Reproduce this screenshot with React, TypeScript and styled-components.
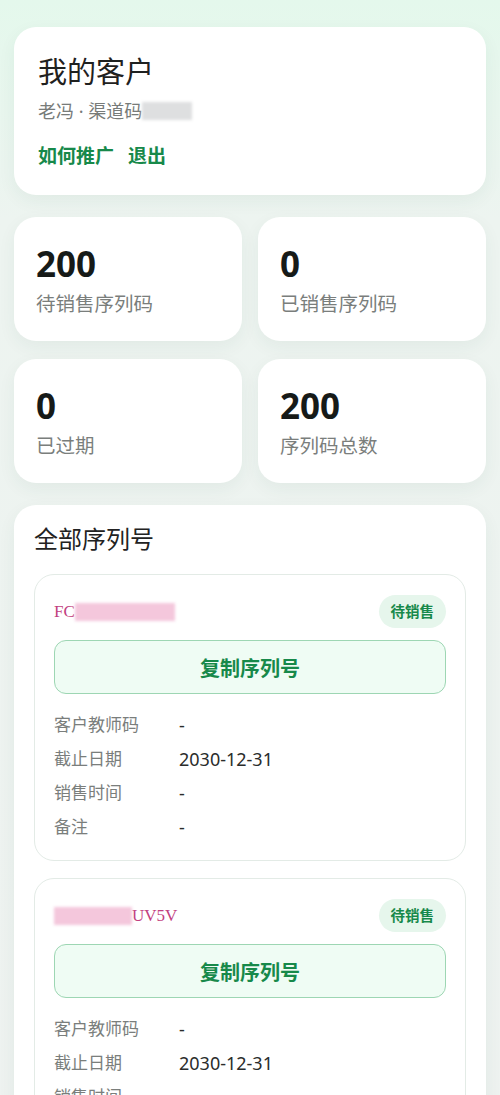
import React from 'react';
import styled, { createGlobalStyle } from 'styled-components';

const GlobalStyle = createGlobalStyle`
  html, body {
    margin: 0;
    padding: 0;
  }
  body {
    font-family: "Noto Sans", "Noto Sans CJK SC", sans-serif;
    background: linear-gradient(180deg, #e4f8ec 0px, #edf4f0 220px, #eef2f0 100%);
    color: #1d1f1e;
  }
`;

const Page = styled.div`
  display: flex;
  flex-direction: column;
  gap: 22px;
  padding: 27px 14px 40px;
  min-height: 1095px;
  box-sizing: border-box;
`;

const Panel = styled.section<{ $pad?: string }>`
  background: #fff;
  border-radius: 22px;
  padding: ${(p) => p.$pad || '24px'};
  box-shadow: 0 6px 18px rgba(40, 80, 60, 0.06);
`;

const HeaderTitle = styled.h1`
  margin: 0;
  font-size: 29px;
  font-weight: 400;
  line-height: 38px;
  color: #1f2120;
`;

const SubLine = styled.div`
  margin-top: 7px;
  font-size: 18px;
  line-height: 26px;
  color: #777b79;
  display: flex;
  align-items: center;
`;

const Mosaic = styled.span<{ $w: number; $color: string }>`
  display: inline-block;
  width: ${(p) => p.$w}px;
  height: 18px;
  background: ${(p) => p.$color};
  filter: blur(1.5px);
  vertical-align: middle;
`;

const Links = styled.div`
  display: flex;
  gap: 14px;
  margin-top: 19px;
`;

const TextLink = styled.a`
  font-size: 19px;
  font-weight: 700;
  color: #17894a;
  text-decoration: none;
  line-height: 26px;
`;

const StatGrid = styled.div`
  display: grid;
  grid-template-columns: 1fr 1fr;
  gap: 18px 16px;
`;

const StatCard = styled.div`
  background: #fff;
  border-radius: 22px;
  height: 124px;
  box-sizing: border-box;
  padding: 25px 22px 0;
  box-shadow: 0 6px 18px rgba(40, 80, 60, 0.06);
`;

const StatValue = styled.div`
  font-size: 35px;
  font-weight: 700;
  line-height: 44px;
  color: #161a18;
`;

const StatLabel = styled.div`
  margin-top: 4px;
  font-size: 19.5px;
  line-height: 28px;
  color: #7a7e7c;
`;

const SectionTitle = styled.h2`
  margin: 0 0 19px;
  font-size: 24px;
  font-weight: 400;
  line-height: 32px;
  color: #222;
`;

const SerialList = styled.div`
  display: flex;
  flex-direction: column;
  gap: 17px;
`;

const SerialCard = styled.div`
  border: 1px solid #e3ebe6;
  border-radius: 20px;
  padding: 20px 19px 21px;
`;

const SerialHead = styled.div`
  display: flex;
  align-items: center;
  justify-content: space-between;
`;

const SerialCode = styled.span`
  font-family: "Liberation Serif", "DejaVu Serif", serif;
  font-size: 17px;
  color: #c23f80;
  display: flex;
  align-items: center;
`;

const Badge = styled.span`
  background: #e6f6ec;
  color: #17894a;
  font-size: 14.5px;
  font-weight: 700;
  border-radius: 17px;
  padding: 0 12px;
  height: 33px;
  line-height: 33px;
`;

const CopyButton = styled.button`
  display: block;
  width: 100%;
  margin-top: 12px;
  height: 54px;
  border: 1px solid #9dd6b3;
  border-radius: 12px;
  background: #effcf4;
  color: #17894a;
  font-family: "Noto Sans CJK SC", sans-serif;
  font-size: 20px;
  font-weight: 700;
  cursor: pointer;
`;

const InfoTable = styled.dl`
  display: grid;
  grid-template-columns: 125px 1fr;
  row-gap: 10px;
  margin: 19px 0 0;
  font-size: 17px;
  line-height: 24px;
`;

const InfoKey = styled.dt`
  color: #7a7e7c;
`;

const InfoVal = styled.dd`
  margin: 0;
  color: #2a2c2b;
  font-size: 18px;
`;

type Serial = { head: React.ReactNode; deadline: string };

const serials: Serial[] = [
  {
    head: (
      <>
        FC<Mosaic $w={100} $color="#f4c7dc" />
      </>
    ),
    deadline: '2030-12-31',
  },
  {
    head: (
      <>
        <Mosaic $w={78} $color="#f4c7dc" />UV5V
      </>
    ),
    deadline: '2030-12-31',
  },
];

const stats = [
  { value: '200', label: '待销售序列码' },
  { value: '0', label: '已销售序列码' },
  { value: '0', label: '已过期' },
  { value: '200', label: '序列码总数' },
];

export default function App() {
  return (
    <>
      <GlobalStyle />
      <Page>
        <Panel $pad="26px 24px 26px">
          <HeaderTitle>我的客户</HeaderTitle>
          <SubLine>
            老冯 · 渠道码<Mosaic $w={50} $color="#dedfe0" />
          </SubLine>
          <Links>
            <TextLink>如何推广</TextLink>
            <TextLink>退出</TextLink>
          </Links>
        </Panel>

        <StatGrid>
          {stats.map((s) => (
            <StatCard key={s.label}>
              <StatValue>{s.value}</StatValue>
              <StatLabel>{s.label}</StatLabel>
            </StatCard>
          ))}
        </StatGrid>

        <Panel $pad="18px 20px">
          <SectionTitle>全部序列号</SectionTitle>
          <SerialList>
            {serials.map((s, i) => (
              <SerialCard key={i}>
                <SerialHead>
                  <SerialCode>{s.head}</SerialCode>
                  <Badge>待销售</Badge>
                </SerialHead>
                <CopyButton>复制序列号</CopyButton>
                <InfoTable>
                  <InfoKey>客户教师码</InfoKey>
                  <InfoVal>-</InfoVal>
                  <InfoKey>截止日期</InfoKey>
                  <InfoVal>{s.deadline}</InfoVal>
                  <InfoKey>销售时间</InfoKey>
                  <InfoVal>-</InfoVal>
                  <InfoKey>备注</InfoKey>
                  <InfoVal>-</InfoVal>
                </InfoTable>
              </SerialCard>
            ))}
          </SerialList>
        </Panel>
      </Page>
    </>
  );
}
